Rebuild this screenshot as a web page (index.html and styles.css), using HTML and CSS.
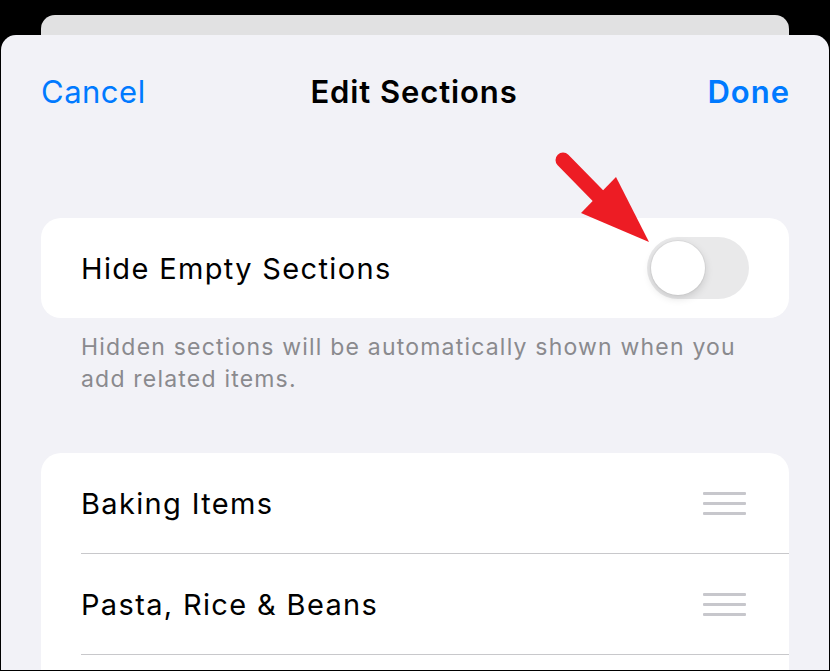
FILE: index.html
```html
<!DOCTYPE html>
<html>
<head>
<meta charset="utf-8">
<link rel="stylesheet" href="styles.css">
</head>
<body>
<div class="screen">
  <div class="back-card"></div>
  <div class="sheet">
    <div class="nav">
      <span class="nav-btn">Cancel</span>
      <span class="nav-title">Edit Sections</span>
      <span class="nav-btn nav-done">Done</span>
    </div>

    <div class="card toggle-card">
      <span class="label">Hide Empty Sections</span>
      <div class="switch"><div class="knob"></div></div>
    </div>
    <p class="footnote">Hidden sections will be automatically shown when you add related items.</p>

    <div class="card list-card">
      <div class="row">
        <span class="label">Baking Items</span>
        <span class="handle"><i></i><i></i><i></i></span>
      </div>
      <div class="row">
        <span class="label">Pasta, Rice &amp; Beans</span>
        <span class="handle"><i></i><i></i><i></i></span>
      </div>
    </div>
  </div>
  <svg class="arrow" width="830" height="671" viewBox="0 0 830 671">
    <line x1="563" y1="160" x2="612" y2="210" stroke="#ed1c24" stroke-width="15" stroke-linecap="round"/>
    <polygon points="581,213 616,177 649,242" fill="#ed1c24"/>
  </svg>
</div>
</body>
</html>
```

FILE: styles.css
```css
* { box-sizing: border-box; }
html, body {
  margin: 0;
  padding: 0;
  background: #000;
}
body {
  width: 830px;
  height: 671px;
  overflow: hidden;
  font-family: "Inter", "Liberation Sans", sans-serif;
}
.screen {
  position: relative;
  width: 830px;
  height: 671px;
  padding: 15px 1px 1px 1px;
  display: flex;
  flex-direction: column;
}
.back-card {
  height: 30px;
  margin: 0 40px -10px 40px;
  background: #e1e1e2;
  border-radius: 14px 14px 0 0;
  flex: none;
}
.sheet {
  flex: 1;
  display: flex;
  flex-direction: column;
  background: #f2f2f7;
  border-radius: 15px 15px 0 0;
  padding: 37px 40px 0 40px;
  overflow: hidden;
  position: relative;
}
.nav {
  display: grid;
  grid-template-columns: 1fr auto 1fr;
  align-items: center;
  height: 40px;
  font-size: 31px;
  line-height: 40px;
  flex: none;
}
.nav-btn {
  color: #007aff;
  letter-spacing: 0.5px;
  justify-self: start;
}
.nav-done {
  font-weight: 600;
  letter-spacing: 1px;
  justify-self: end;
  margin-right: -1px;
}
.nav-title {
  font-weight: 600;
  color: #000;
  letter-spacing: 0.9px;
  margin-left: -2px;
}
.card {
  background: #fff;
  border-radius: 20px;
}
.toggle-card {
  margin-top: 106px;
  height: 100px;
  display: flex;
  align-items: center;
  justify-content: space-between;
  padding: 0 40px;
  flex: none;
}
.label {
  font-size: 29px;
  color: #000;
  letter-spacing: 1.35px;
}
.switch {
  width: 102px;
  height: 62px;
  border-radius: 31px;
  background: #e9e9ea;
  padding: 4px;
}
.knob {
  width: 54px;
  height: 54px;
  border-radius: 50%;
  background: #fff;
  box-shadow: 0 3px 8px rgba(0,0,0,0.15), 0 0 0 1px rgba(0,0,0,0.04);
}
.footnote {
  margin: 13px 0 0 0;
  padding: 0 40px;
  font-size: 23px;
  line-height: 32px;
  color: #8a8a8e;
  letter-spacing: 1.2px;
  flex: none;
}
.list-card {
  margin-top: 58px;
  border-radius: 20px 20px 0 0;
  padding-left: 40px;
  flex: 1;
}
.row {
  height: 101px;
  display: flex;
  align-items: center;
  justify-content: space-between;
  padding-right: 43px;
  border-bottom: 1px solid #c8c8cb;
  padding-top: 1px;
}
.handle {
  display: flex;
  flex-direction: column;
  gap: 7px;
  width: 43px;
}
.handle i {
  display: block;
  height: 3px;
  background: #c7c7cc;
  border-radius: 1px;
}
.arrow {
  position: absolute;
  left: 0;
  top: 0;
  pointer-events: none;
}
```
